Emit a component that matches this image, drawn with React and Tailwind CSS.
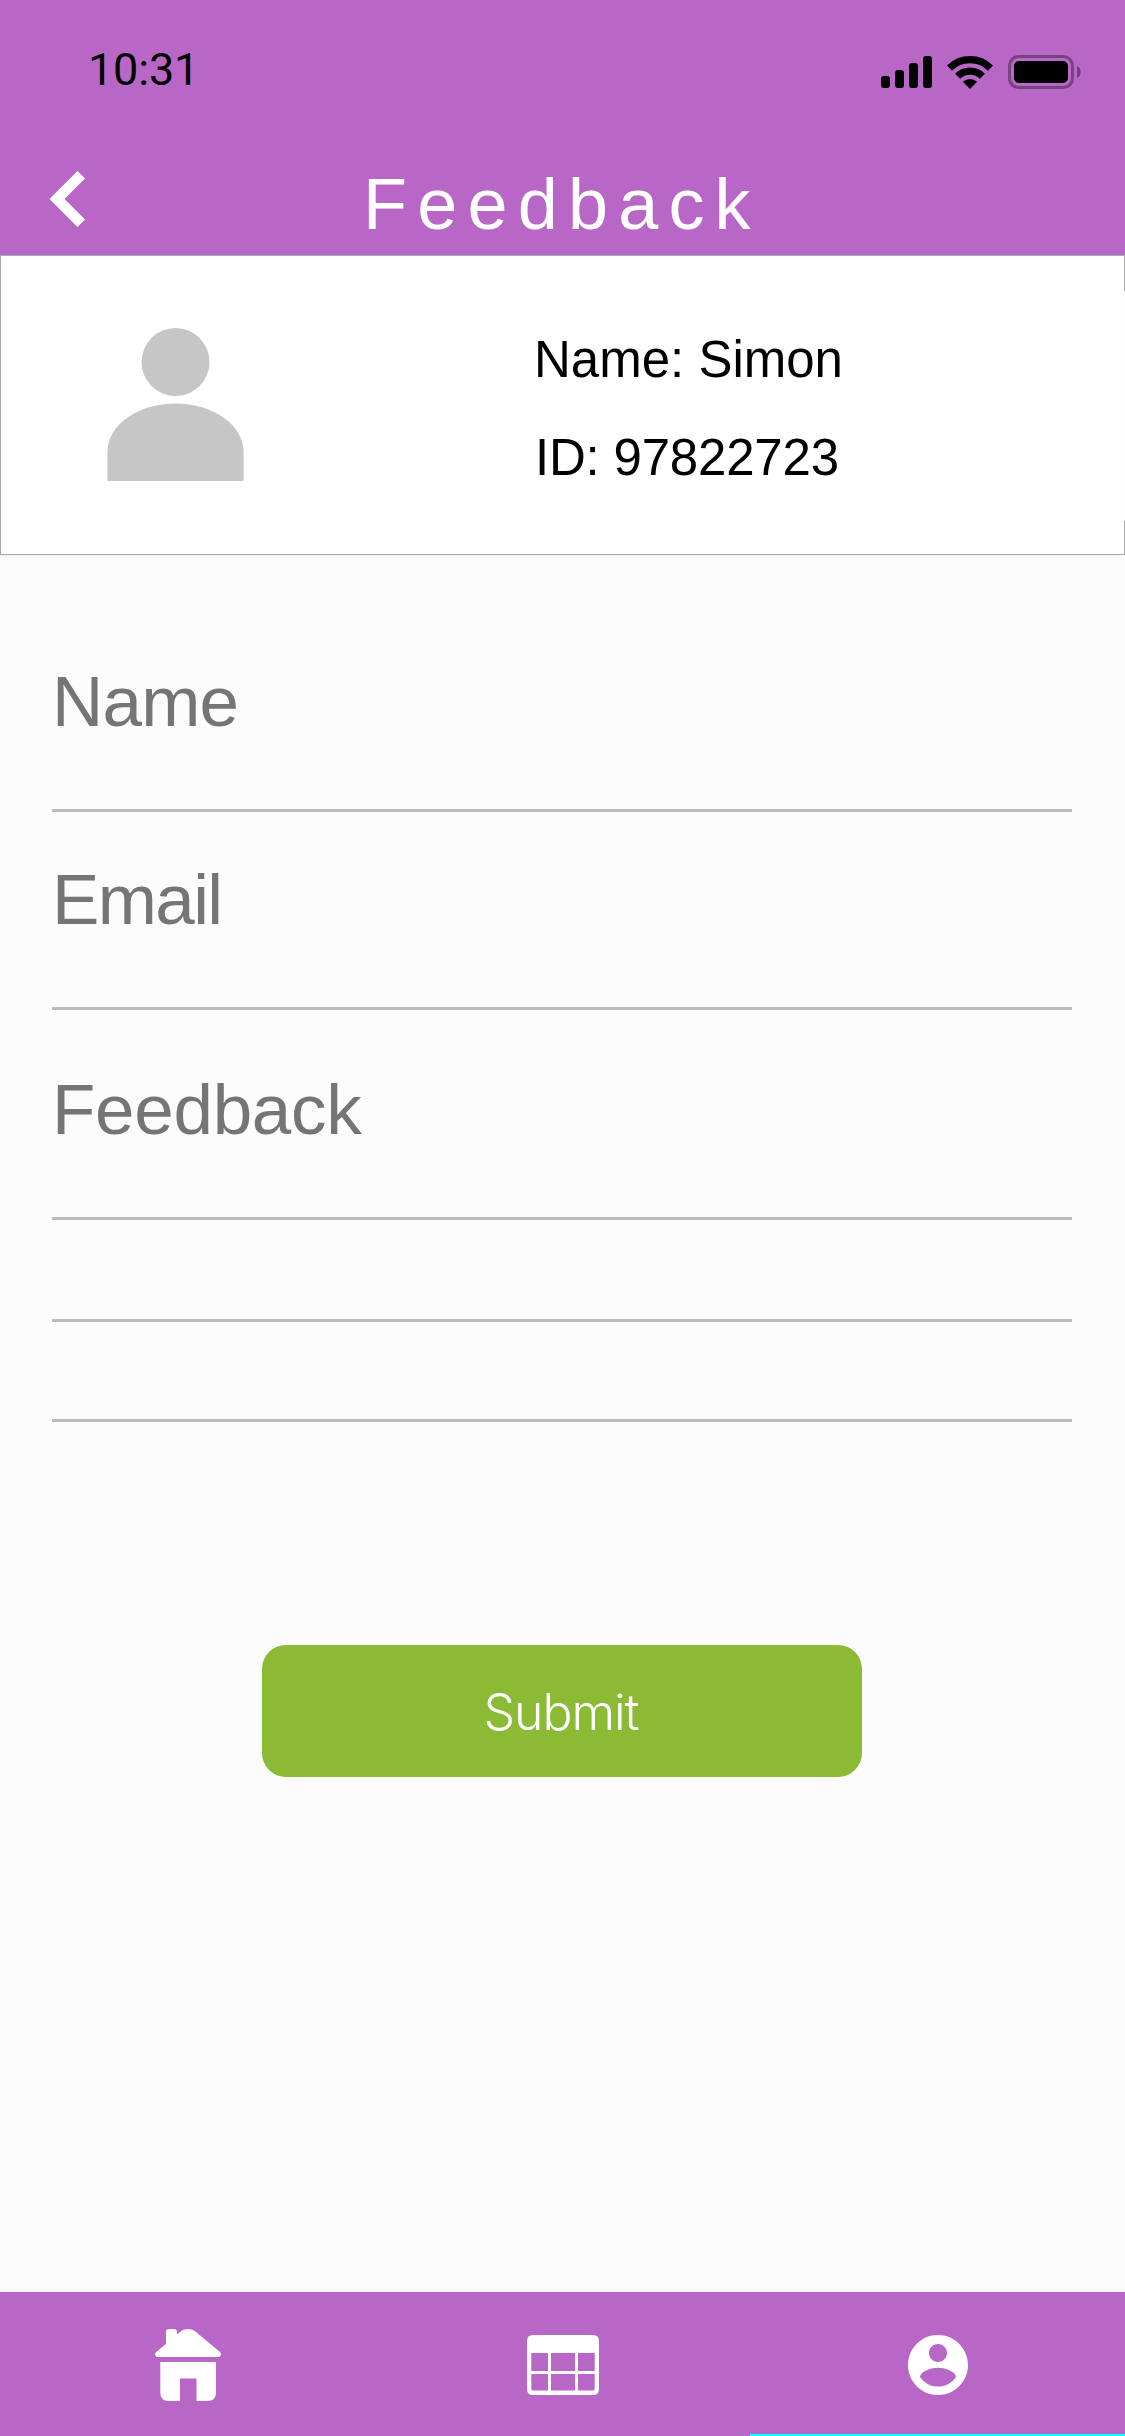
function SignalIcon() {
  return (
    <div className="flex h-8 items-end gap-[5px]">
      <span className="h-3 w-[9px] rounded-[3px] bg-black" />
      <span className="h-[18px] w-[9px] rounded-[3px] bg-black" />
      <span className="h-[25px] w-[9px] rounded-[3px] bg-black" />
      <span className="h-8 w-[9px] rounded-[3px] bg-black" />
    </div>
  );
}

function WifiIcon() {
  return (
    <svg width="46" height="33" viewBox="0 0 46 33" fill="none">
      <path d="M2.5 12.1A29 29 0 0 1 43.5 12.1" stroke="#000" strokeWidth="7.2" />
      <path d="M10.6 20.2A17.5 17.5 0 0 1 35.4 20.2" stroke="#000" strokeWidth="7.2" />
      <path d="M23 33L15.9 25.7A10.4 10.4 0 0 1 30.1 25.7Z" fill="#000" />
    </svg>
  );
}

function BatteryIcon() {
  return (
    <svg width="74" height="34" viewBox="0 0 74 34">
      <rect x="1.5" y="1.5" width="63" height="31" rx="9" fill="none" stroke="#000" strokeOpacity="0.35" strokeWidth="3" />
      <rect x="6" y="6" width="54" height="22" rx="5" fill="#000" />
      <path d="M69 11C74 13 74 21 69 23Z" fill="#000" fillOpacity="0.4" />
    </svg>
  );
}

function AvatarIcon() {
  return (
    <svg width="137" height="154" viewBox="0 0 137 154" fill="#c6c6c6">
      <circle cx="68.5" cy="34" r="34" />
      <path d="M0.4 153V124C0.4 97 31 75.4 68.5 75.4S136.6 97 136.6 124V153Z" />
    </svg>
  );
}

function HomeIcon() {
  return (
    <svg width="66" height="72" viewBox="0 0 66 72" fill="#fff">
      <path d="M11 15V3Q11 0 14 0H19Q22 0 22 3V5.5L26.5 1.8Q29 0 33 0Q37 0 39.5 1.8L65 23Q66.3 24.3 66 26Q65.5 28 63 28H3Q0.5 28 0.2 26Q-0.2 24.3 1.2 23Z" />
      <path d="M5.3 33H61V63.5Q61 72 52.5 72H41.5V49.5H25V72H13.5Q5.3 72 5.3 63.5Z" />
    </svg>
  );
}

function CalendarIcon() {
  return (
    <svg width="72" height="60" viewBox="0 0 72 60" fill="#fff">
      <path
        fillRule="evenodd"
        d="M6 0H66Q72 0 72 6V54Q72 60 66 60H6Q0 60 0 54V6Q0 0 6 0ZM4.3 18V36H21V18ZM24 18V36H48V18ZM51 18V36H67.7V18ZM4.3 39V54Q4.3 55.6 6 55.6H21V39ZM24 39V55.6H48V39ZM51 39V55.6H66Q67.7 55.6 67.7 54V39Z"
      />
    </svg>
  );
}

function AccountIcon() {
  return (
    <svg width="60" height="60" viewBox="2 2 20 20" fill="#fff">
      <path d="M12 2C6.48 2 2 6.48 2 12s4.48 10 10 10 10-4.48 10-10S17.52 2 12 2zm0 3c1.66 0 3 1.34 3 3s-1.34 3-3 3-3-1.34-3-3 1.34-3 3-3zm0 14.2c-2.5 0-4.71-1.28-6-3.22.03-1.99 4-3.08 6-3.08 1.99 0 5.97 1.09 6 3.08-1.29 1.94-3.5 3.22-6 3.22z" />
    </svg>
  );
}

export default function App() {
  return (
    <div className="flex h-[2436px] w-[1125px] flex-col overflow-hidden bg-[#fcfcfc] font-['Liberation_Sans',sans-serif]">
      <header className="flex h-[255px] shrink-0 flex-col bg-[#b967c7]">
        <div className="flex h-[143px] items-start justify-between pt-[39px] pr-[43px] pl-[88px]">
          <span className="pt-px font-['Roboto',sans-serif] text-[45px] leading-[60px] tracking-[-0.2px] text-black">10:31</span>
          <div className="flex items-center pt-4">
            <SignalIcon />
            <span className="w-[15px]" />
            <WifiIcon />
            <span className="w-[15px]" />
            <BatteryIcon />
          </div>
        </div>
        <div className="flex h-28 items-center pl-[49px]">
          <button aria-label="Back" className="w-[36px]">
            <svg width="36" height="56" viewBox="0 0 36 56" fill="#fff">
              <path d="M28.5 0L36 7.5L15.5 28L36 48.5L28.5 56L0.5 28Z" />
            </svg>
          </button>
          <h1 className="ml-[278px] pt-[10px] text-[72px] leading-[80px] tracking-[10.2px] text-white">Feedback</h1>
        </div>
      </header>

      <section className="relative flex h-[300px] shrink-0 border border-[#a9a9a9] bg-white pt-[72px] pl-[106px] shadow-[0_1px_4px_rgba(0,0,0,0.06)]">
        <AvatarIcon />
        <div className="ml-[290px] pt-0.5">
          <p className="text-[51px] leading-[60px] text-black">Name: Simon</p>
          <p className="mt-[38px] ml-px text-[51px] leading-[60px] tracking-[-0.2px] text-black">ID: 97822723</p>
        </div>
        <span className="absolute top-[35px] -right-px h-[230px] w-px bg-[#fcfcfc]" />
      </section>

      <main className="flex flex-1 flex-col pr-[53px] pl-[52px] text-[71px] leading-[80px] text-[#757575]">
        <div className="h-[257px] border-b-[3px] border-[#bcbcbc] pt-[107px]">
          <p className="tracking-[-0.8px]">Name</p>
        </div>
        <div className="h-[198px] border-b-[3px] border-[#bcbcbc] pt-12">
          <p className="tracking-[-1.6px]">Email</p>
        </div>
        <div className="h-[210px] border-b-[3px] border-[#bcbcbc] pt-[60px]">
          <p className="tracking-[-0.3px]">Feedback</p>
        </div>
        <div className="h-[102px] border-b-[3px] border-[#bcbcbc]" />
        <div className="h-[100px] border-b-[3px] border-[#bcbcbc]" />
        <button className="mt-[223px] ml-[210px] h-[132px] w-[600px] rounded-[24px] bg-[#8bba35] pt-[2px] pr-[2px] font-['Inter',sans-serif] text-[50px] leading-[60px] font-light tracking-[-1.1px] text-white">
          Submit
        </button>
      </main>

      <nav className="relative flex h-36 shrink-0 items-center bg-[#b967c7]">
        <div className="flex flex-1 justify-center pt-0.5">
          <HomeIcon />
        </div>
        <div className="flex flex-1 justify-center pt-0.5">
          <CalendarIcon />
        </div>
        <div className="flex flex-1 justify-center pt-0.5">
          <AccountIcon />
        </div>
        <span className="absolute right-0 bottom-0 h-[2px] w-[375px] bg-[#15ffff]" />
      </nav>
    </div>
  );
}
